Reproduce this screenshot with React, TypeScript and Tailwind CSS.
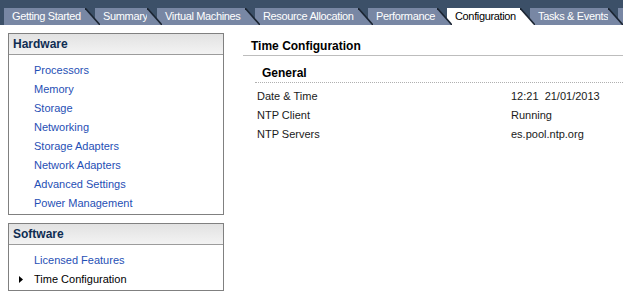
const tabs = [
  { label: "Getting Started", w: "w-[81px]", z: "z-[8]" },
  { label: "Summary", w: "w-[52px]", z: "z-[7]" },
  { label: "Virtual Machines", w: "w-[88px]", z: "z-[6]" },
  { label: "Resource Allocation", w: "w-[103px]", z: "z-[5]" },
  { label: "Performance", w: "w-[69px]", z: "z-[4]" },
  { label: "Configuration", w: "w-[73px]", z: "z-[3]", active: true },
  { label: "Tasks & Events", w: "w-[78px]", z: "z-[2]" },
  // next tab only peeks in at the right edge
  { label: "", w: "w-[60px]", z: "z-[1]" },
];

const hardware = [
  "Processors",
  "Memory",
  "Storage",
  "Networking",
  "Storage Adapters",
  "Network Adapters",
  "Advanced Settings",
  "Power Management",
];

const general = [
  ["Date & Time", "12:21  21/01/2013"],
  ["NTP Client", "Running"],
  ["NTP Servers", "es.pool.ntp.org"],
];

const Tab = ({ label, w, z, active }: { label: string; w: string; z: string; active?: boolean }) => {
  const fill = active ? "#ffffff" : "#7887a4";
  return (
    <div className={`relative flex h-[17px] shrink-0 -ml-[5px] first:ml-0 ${z}`}>
      <div
        className={`${w} pl-[8px] leading-[17px] whitespace-nowrap tracking-[-0.35px] ${
          active ? "bg-white text-black" : "bg-[#7887a4] text-white"
        }`}
      >
        {label}
      </div>
      <svg width="15" height="17" viewBox="0 0 15 17" className="block">
        <polygon points="0,0 15,17 0,17" fill={fill} />
        <line x1="0" y1="0" x2="15" y2="17" stroke="#1b2532" strokeWidth="1.6" />
      </svg>
    </div>
  );
};

const Panel = ({ title, children }: { title: string; children: React.ReactNode }) => (
  <div className="border border-[#808080] bg-white">
    <div className="h-[21px] border-b border-[#9c9c9c] bg-gradient-to-b from-[#e2e2e2] to-[#f3f3f3] pl-[4px] text-[12px] font-bold leading-[20px] text-[#0f2d52]">
      {title}
    </div>
    <div className="pt-[6px] pb-[1px]">{children}</div>
  </div>
);

const NavItem = ({ label, selected }: { label: string; selected?: boolean }) => (
  <div className="flex h-[19px] items-center">
    <div className="flex w-[25px] justify-end pr-[11px]">
      {selected && (
        <svg width="4" height="7" viewBox="0 0 4 7" className="block">
          <polygon points="0,0 4,3.5 0,7" fill="#000" />
        </svg>
      )}
    </div>
    <span className={selected ? "text-black" : "text-[#1f4fb5]"}>{label}</span>
  </div>
);

export default function App() {
  return (
    <div className="h-[292px] w-[623px] overflow-hidden bg-white text-[11px] [font-family:'Liberation_Sans',Arial,sans-serif]">
      {/* Tab strip */}
      <div className="flex h-[25px] items-end overflow-hidden bg-[#3c5068] pl-[4px]">
        {tabs.map((t, i) => (
          <Tab key={i} {...t} />
        ))}
      </div>

      <div className="flex">
        {/* Left navigation */}
        <div className="ml-[8px] w-[216px] shrink-0 pt-[8px]">
          <Panel title="Hardware">
            {hardware.map((h) => (
              <NavItem key={h} label={h} />
            ))}
          </Panel>
          <div className="mt-[8px]">
            <Panel title="Software">
              <NavItem label="Licensed Features" />
              <NavItem label="Time Configuration" selected />
            </Panel>
          </div>
        </div>

        {/* Details */}
        <div className="ml-[19px] flex-1">
          <div className="border-b border-[#bdbdbd] pl-[8px] pt-[12px] text-[12px] font-bold leading-[18px] text-black">
            Time Configuration
          </div>
          <div className="ml-[12px]">
            <div className="border-b border-dotted border-[#b0b0b0] pl-[7px] pt-[8px] text-[12px] font-bold leading-[18px] text-black">
              General
            </div>
            <div className="pt-[4px] text-[#1a1a1a]">
              {general.map(([k, v]) => (
                <div key={k} className="flex h-[19px] items-center pl-[2px]">
                  <span className="w-[254px] shrink-0">{k}</span>
                  <span className="whitespace-pre">{v}</span>
                </div>
              ))}
            </div>
          </div>
        </div>
      </div>
    </div>
  );
}
